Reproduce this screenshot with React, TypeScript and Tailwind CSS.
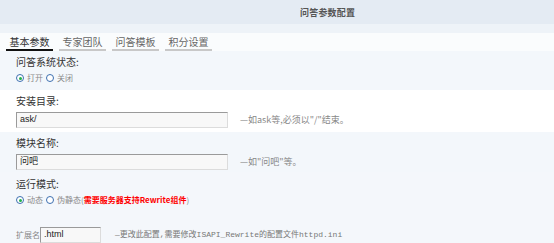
import React from "react";

const cjk = { fontFamily: '"Noto Sans CJK SC", "Liberation Sans", sans-serif' };

function Radio({ checked, label }: { checked?: boolean; label: React.ReactNode }) {
  return (
    <span className="flex items-center gap-[3px]">
      <span className="flex h-[8px] w-[8px] items-center justify-center rounded-full border border-[#3c6fb0] bg-white">
        {checked && <span className="h-[3px] w-[3px] rounded-full bg-[#22b14c]" />}
      </span>
      <span className="text-[8px] leading-[10px] text-[#8a8a8a]">{label}</span>
    </span>
  );
}

function Input({ value, w }: { value: string; w: string }) {
  return (
    <div
      className={`${w} flex h-[16px] items-center border border-t-[#9a9a9a] border-l-[#9a9a9a] border-r-[#dcdcdc] border-b-[#dcdcdc] bg-[#f8f8f8] pl-[3px] text-[9px] text-[#222]`}
      style={{ fontFamily: '"Liberation Sans", "Noto Sans CJK SC", sans-serif' }}
    >
      {value}
    </div>
  );
}

export default function App() {
  return (
    <div className="h-[243px] w-[554px] overflow-hidden bg-[#f4f7fb]" style={cjk}>
      <div className="flex h-[24px] items-center bg-[#e4ebf3] pl-[300px]">
        <span className="text-[9px] font-bold leading-none tracking-[0.2px] text-[#555]">问答参数配置</span>
      </div>
      <div className="h-[9px] bg-[#eef3f8]" />
      <div className="flex h-[18px] items-end gap-[6px] bg-[#fafcfd] pl-[6px]">
        <div className="flex h-[18px] w-[47px] items-center justify-center border-b-[2px] border-[#111] pt-[1px] text-[10px] text-[#333]">基本参数</div>
        <div className="flex h-[18px] w-[47px] items-center justify-center border-b-[2px] border-[#c8c8c8] pt-[1px] text-[10px] text-[#666]">专家团队</div>
        <div className="flex h-[18px] w-[47px] items-center justify-center border-b-[2px] border-[#c8c8c8] pt-[1px] text-[10px] text-[#666]">问答模板</div>
        <div className="flex h-[18px] w-[47px] items-center justify-center border-b-[2px] border-[#c8c8c8] pt-[1px] text-[10px] text-[#666]">积分设置</div>
      </div>

      <div className="flex h-[39px] flex-col bg-[#f3f7fb] pl-[16px] pt-[4px]">
        <div className="text-[10px] leading-[14px] text-[#333]">问答系统状态:</div>
        <div className="mt-[4px] flex items-center gap-[3px]">
          <Radio checked label="打开" />
          <Radio label="关闭" />
        </div>
      </div>

      <div className="flex h-[42px] flex-col bg-white pl-[16px] pt-[4px]">
        <div className="text-[10px] leading-[14px] text-[#333]">安装目录:</div>
        <div className="mt-[4px] flex items-center">
          <Input value="ask/" w="w-[212px]" />
          <span className="ml-[12px] text-[9px] text-[#888]">—如ask等,必须以"/"结束。</span>
        </div>
      </div>

      <div className="flex h-[40px] flex-col bg-[#f3f7fb] pl-[16px] pt-[4px]">
        <div className="text-[10px] leading-[14px] text-[#333]">模块名称:</div>
        <div className="mt-[4px] flex items-center">
          <Input value="问吧" w="w-[212px]" />
          <span className="ml-[12px] text-[9px] text-[#888]">—如"问吧"等。</span>
        </div>
      </div>

      <div className="flex flex-col bg-[#f4f7fb] pl-[16px] pt-[5px]">
        <div className="text-[10px] leading-[14px] text-[#333]">运行模式:</div>
        <div className="mt-[4px] flex items-center gap-[3px]">
          <Radio checked label="动态" />
          <Radio
            label={
              <>
                伪静态(<span className="font-bold text-[#ff0000]">需要服务器支持Rewrite组件</span>)
              </>
            }
          />
        </div>
        <div className="mt-[22px] flex items-center">
          <span className="text-[8px] text-[#888]">扩展名</span>
          <Input value=".html" w="w-[61px]" />
          <span
            className="ml-[14px] text-[8px] text-[#777]"
            style={{ fontFamily: '"Liberation Mono", "Noto Sans CJK SC", monospace' }}
          >
            —更改此配置,需要修改ISAPI_Rewrite的配置文件httpd.ini
          </span>
        </div>
      </div>
    </div>
  );
}
